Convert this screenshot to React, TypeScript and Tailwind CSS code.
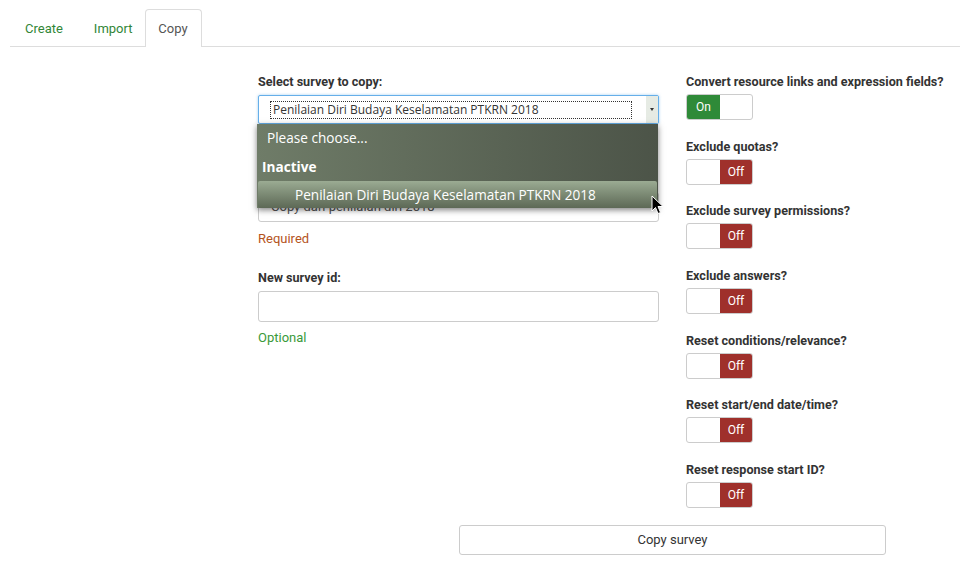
import React from "react";

const toggles = [
  { label: "Convert resource links and expression fields?", on: true },
  { label: "Exclude quotas?", on: false },
  { label: "Exclude survey permissions?", on: false },
  { label: "Exclude answers?", on: false },
  { label: "Reset conditions/relevance?", on: false },
  { label: "Reset start/end date/time?", on: false },
  { label: "Reset response start ID?", on: false },
];

const Toggle = ({ on }: { on: boolean }) => (
  <div className="flex h-[26px] w-[67px] overflow-hidden rounded-[3px] border border-[#cccccc] bg-white text-[12px] text-white">
    {on ? (
      <>
        <div className="flex w-[33px] items-center justify-center bg-[#2f8a38]">On</div>
        <div className="flex-1" />
      </>
    ) : (
      <>
        <div className="w-[33px]" />
        <div className="flex flex-1 items-center justify-center bg-[#9f302b]">Off</div>
      </>
    )}
  </div>
);

const Cursor = () => (
  <svg width="14" height="20" viewBox="0 0 14 20" className="absolute left-[651px] top-[195px]">
    <path d="M1 1 L1 16 L4.5 12.5 L7 18.5 L9.5 17.5 L7 11.5 L12 11.5 Z" fill="#000" stroke="#fff" strokeWidth="1" />
  </svg>
);

export default function App() {
  return (
    <div className="relative h-[572px] w-[960px] overflow-hidden bg-white font-['Roboto',sans-serif] text-[13px] text-[#333]">
      {/* tabs */}
      <div className="ml-[10px] flex h-[47px] items-end border-b border-[#dddddd] pt-[9px]">
        <div className="flex h-[37px] items-center pt-[2px] pl-[15px] pr-[17px] text-[#328637]">Create</div>
        <div className="flex h-[37px] items-center pt-[2px] pl-[14px] pr-[12px] text-[#328637]">Import</div>
        <div className="-mb-px flex h-[38px] w-[57px] items-center justify-center rounded-t-[4px] border border-b-0 border-[#dddddd] bg-white pt-[1px] text-[#555]">
          Copy
        </div>
      </div>

      <div className="flex pt-[26px]">
        {/* left column */}
        <div className="ml-[258px] w-[401px]">
          <div className="mb-[4px] h-[18px] text-[12.6px] font-bold leading-[18px]">Select survey to copy:</div>
          <div className="flex h-[29px] items-center rounded-[2px] border border-[#66afe9] bg-white pl-[11px] shadow-[0_0_3px_rgba(102,175,233,0.6)]">
            <div className="flex h-[18px] flex-1 items-center border border-dotted border-[#333] pl-[2px] font-['Open_Sans',sans-serif] text-[12px] text-[#333]">
              Penilaian Diri Budaya Keselamatan PTKRN 2018
            </div>
            <div className="ml-[14px] flex h-full w-[12px] items-center justify-center bg-[#e6ebe4]">
              <div className="h-0 w-0 border-x-[2.5px] border-t-[3px] border-x-transparent border-t-[#333]" />
            </div>
          </div>

          <div className="mt-[45px] mb-[5px] h-[18px] text-[12.6px] font-bold leading-[18px]">New survey title:</div>
          <div className="flex h-[30px] items-center rounded-[3px] border border-[#cccccc] px-[12px] text-[#555]">
            Copy dari penilaian diri 2018
          </div>
          <div className="mt-[8px] h-[18px] leading-[18px] text-[#b5541d]">Required</div>

          <div className="mt-[21px] mb-[4px] h-[18px] text-[12.6px] font-bold leading-[18px]">New survey id:</div>
          <div className="h-[31px] rounded-[3px] border border-[#cccccc]" />
          <div className="mt-[7px] h-[18px] leading-[18px] text-[#3a9a3a]">Optional</div>
        </div>

        {/* right column */}
        <div className="ml-[27px] flex flex-col">
          {toggles.map((t) => (
            <div key={t.label} className="h-[64.7px]">
              <div className="mb-[3px] h-[18px] text-[12.6px] font-bold leading-[18px]">{t.label}</div>
              <Toggle on={t.on} />
            </div>
          ))}
        </div>
      </div>

      <div className="mt-[-1px] flex pl-[459px]">
        <button className="h-[30px] w-[427px] rounded-[3px] border border-[#cccccc] bg-white text-[13px] text-[#333]">
          Copy survey
        </button>
      </div>

      {/* open select dropdown */}
      <div className="absolute left-[257px] top-[124px] w-[401px] bg-gradient-to-r from-[#6f7c68] to-[#4c5448] font-['Open_Sans',sans-serif] text-white shadow-[0_2px_6px_rgba(0,0,0,0.5)]">
        <div className="flex h-[29px] items-center pl-[10px] text-[13.6px]">Please choose...</div>
        <div className="flex h-[28px] items-center pl-[5px] text-[13.6px] font-bold">Inactive</div>
        <div className="mx-[1px] flex h-[27px] items-center rounded-[2px] bg-gradient-to-b from-[#9bab93] to-[#5d6956] pl-[37px] pt-[1px] text-[13.6px]">
          Penilaian Diri Budaya Keselamatan PTKRN 2018
        </div>
      </div>
      <Cursor />
    </div>
  );
}
